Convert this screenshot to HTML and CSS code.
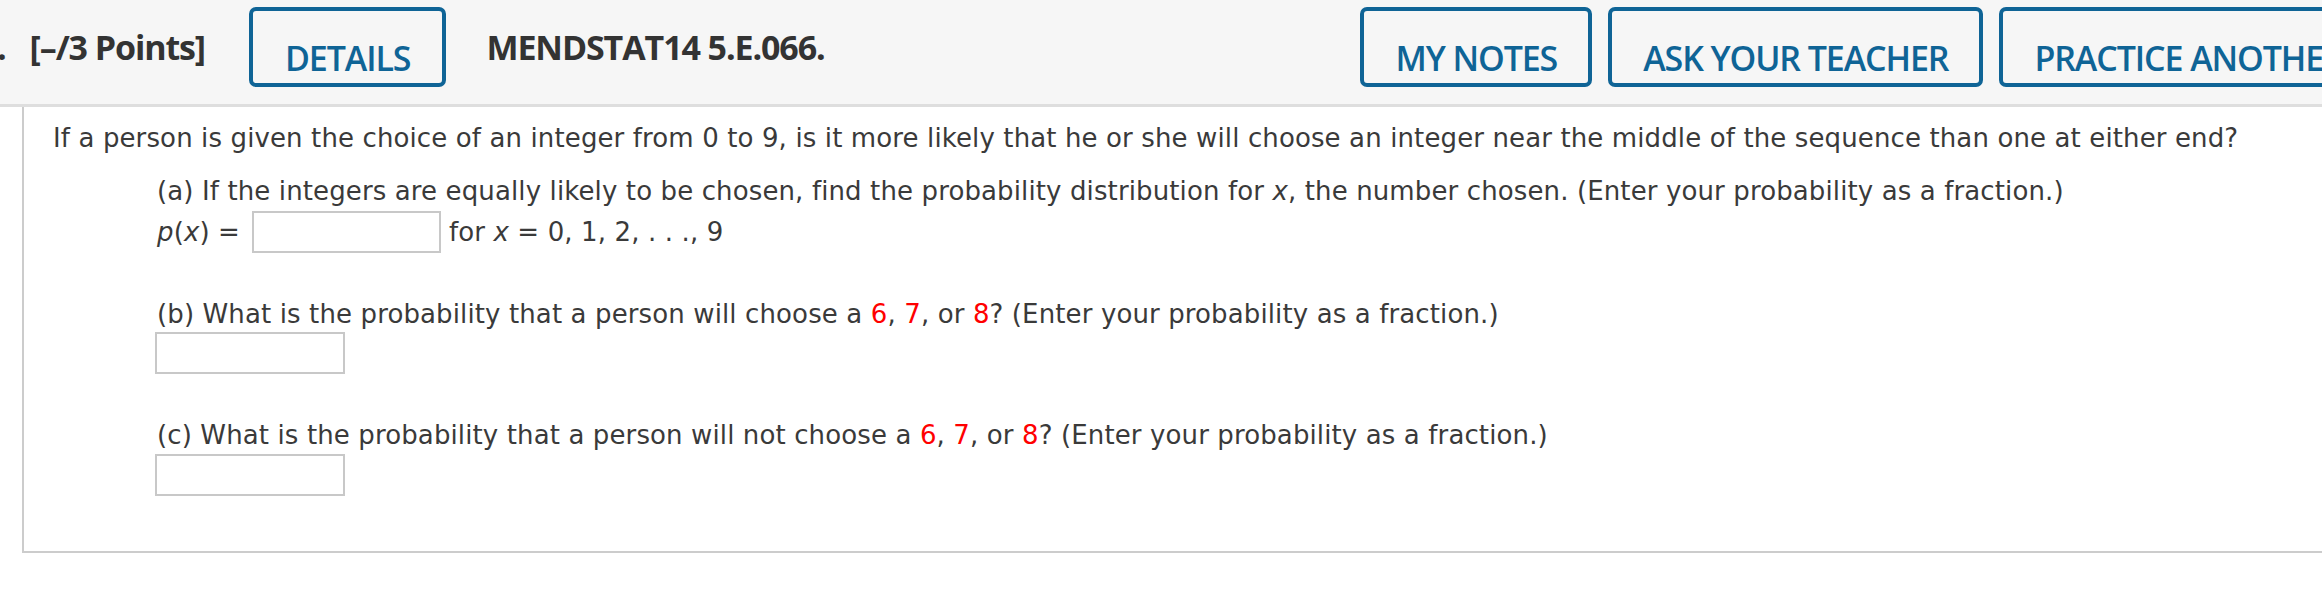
FILE: index.html
```html
<!DOCTYPE html>
<html lang="en">
<head>
<meta charset="utf-8">
<title>MENDSTAT14 5.E.066.</title>
<link rel="stylesheet" href="styles.css">
</head>
<body>
<div class="header">
  <div class="points"><span class="num">.</span>[–/3 Points]</div>
  <button class="btn btn-details">DETAILS</button>
  <div class="title">MENDSTAT14 5.E.066.</div>
  <button class="btn">MY NOTES</button>
  <button class="btn">ASK YOUR TEACHER</button>
  <button class="btn">PRACTICE ANOTHER</button>
</div>
<div class="question">
  <p class="intro">If a person is given the choice of an integer from 0 to 9, is it more likely that he or she will choose an integer near the middle of the sequence than one at either end?</p>
  <div class="part">
    <p class="line">(a) If the integers are equally likely to be chosen, find the probability distribution for <i>x</i>, the number chosen. (Enter your probability as a fraction.)</p>
    <div class="answer-row">
      <span class="label"><i>p</i>(<i>x</i>) =</span>
      <span class="field field-a"></span>
      <span class="after">for <i>x</i> = 0, 1, 2, . . ., 9</span>
    </div>
  </div>
  <div class="part part-b">
    <p class="line">(b) What is the probability that a person will choose a <span class="red">6</span>, <span class="red">7</span>, or <span class="red">8</span>? (Enter your probability as a fraction.)</p>
    <span class="field field-b"></span>
  </div>
  <div class="part part-c">
    <p class="line">(c) What is the probability that a person will not choose a <span class="red">6</span>, <span class="red">7</span>, or <span class="red">8</span>? (Enter your probability as a fraction.)</p>
    <span class="field field-c"></span>
  </div>
</div>
</body>
</html>
```
FILE: styles.css
```css
html, body {
  margin: 0;
  padding: 0;
  background: #ffffff;
  overflow: hidden;
}

body {
  width: 2322px;
  height: 596px;
  color: #3a3a3a;
}

.header {
  display: flex;
  align-items: flex-start;
  height: 104px;
  background: #f6f6f6;
  border-bottom: 3px solid #dedede;
  overflow: hidden;
  font-family: "Open Sans", "Liberation Sans", sans-serif;
  letter-spacing: -1.1px;
  white-space: nowrap;
}

.points {
  flex: 0 0 auto;
  margin: 30px 0 0 -3px;
  font-size: 34px;
  line-height: 34px;
  font-weight: 700;
  color: #333333;
}

.num {
  margin-right: 24px;
}

.title {
  flex: 0 0 auto;
  width: 874px;
  margin-top: 30px;
  font-size: 34px;
  line-height: 34px;
  font-weight: 700;
  color: #333333;
}

.btn {
  flex: 0 0 auto;
  box-sizing: border-box;
  height: 80px;
  margin: 7px 16px 0 0;
  padding: 30px 31px 8px;
  border: 4px solid #0f6496;
  border-radius: 7px;
  background: #f6f6f6;
  color: #0f6496;
  font-family: inherit;
  letter-spacing: inherit;
  font-size: 34px;
  line-height: 34px;
  font-weight: 600;
  text-align: center;
}

.btn-details {
  margin: 7px 40px 0 44px;
  padding: 30px 32px 8px;
}

.question {
  margin-left: 22px;
  border-left: 2px solid #cccccc;
  border-bottom: 2px solid #cccccc;
  padding: 15px 0 55px 29px;
  font-family: "DejaVu Sans", Verdana, sans-serif;
  font-size: 26px;
  line-height: 32px;
  letter-spacing: 0.12px;
  color: #3a3a3a;
  white-space: nowrap;
}

.intro {
  margin: 0;
}

.part {
  margin: 21px 0 0 104px;
}

.line {
  margin: 0;
}

.answer-row {
  display: flex;
  align-items: center;
  margin-top: 4px;
}

.label {
  margin-right: 12px;
}

.after {
  margin-left: 8px;
}

.field {
  display: block;
  box-sizing: border-box;
  width: 190px;
  height: 42px;
  margin-left: -2px;
  border: 2px solid #c8c8c8;
  background: #ffffff;
}

.field-a {
  margin: 0;
  width: 189px;
}

.field-b {
  margin-top: 2px;
}

.field-c {
  margin-top: 3px;
}

.part-b {
  margin-top: 45px;
}

.part-c {
  margin-top: 45px;
}

.red {
  color: #ff0000;
}
```
